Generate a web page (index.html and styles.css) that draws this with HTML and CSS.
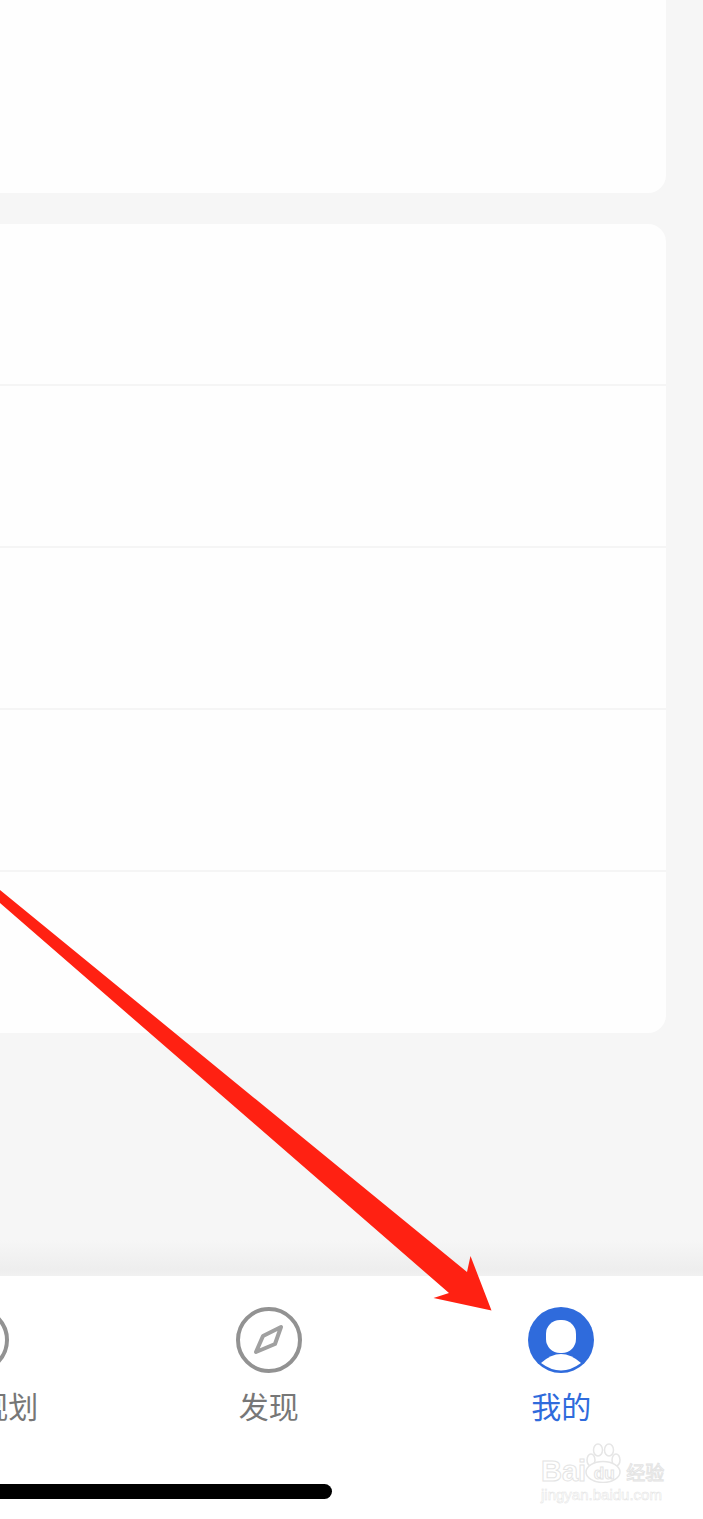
FILE: index.html
```html
<!DOCTYPE html>
<html lang="zh-CN">
<head>
    <meta charset="UTF-8">
    <meta name="viewport" content="width=device-width, initial-scale=1.0">
    <title>我的</title>
    <link rel="stylesheet" href="styles.css">
</head>
<body>
    <div class="screen">
        <div class="content">
            <div class="card card-top"></div>
            <div class="card">
                <div class="row"></div>
                <div class="row"></div>
                <div class="row"></div>
                <div class="row"></div>
                <div class="row row-last"></div>
            </div>
        </div>

        <div class="tabbar">
            <div class="tabs">
                <div class="tab">
                    <svg class="tab-icon" viewBox="0 0 66 66">
                        <circle cx="33" cy="33" r="31" fill="none" stroke="#929292" stroke-width="4"/>
                    </svg>
                    <span class="tab-label tab-label-long">行程规划</span>
                </div>
                <div class="tab">
                    <svg class="tab-icon" viewBox="0 0 66 66">
                        <circle cx="33" cy="33" r="31" fill="none" stroke="#929292" stroke-width="4"/>
                        <path d="M45 20 L39 37 L20 45 L27 29 Z" fill="none" stroke="#a0a0a0" stroke-width="4" stroke-linejoin="round"/>
                    </svg>
                    <span class="tab-label">发现</span>
                </div>
                <div class="tab tab-active">
                    <svg class="tab-icon" viewBox="0 0 66 66">
                        <circle cx="33" cy="33" r="33" fill="#2f6bdc"/>
                        <rect x="18" y="13" width="30" height="33" rx="14" fill="#fff"/>
                        <path d="M13 56 Q33 38 53 56 Q33 71 13 56 Z" fill="#fff"/>
                    </svg>
                    <span class="tab-label">我的</span>
                </div>
            </div>
            <div class="home-bar"></div>
        </div>

        <!-- red annotation arrow drawn over the screenshot -->
        <svg class="arrow" viewBox="0 0 703 1519">
            <path d="M0 890 L467 1272 L470.5 1256 L491.5 1310.5 L433.5 1298 L449 1293 L0 903 Z" fill="#ff2112"/>
        </svg>

        <div class="watermark">
            <svg class="paw" viewBox="0 0 36 40">
                <g fill="#fff" stroke="#e6e6e6" stroke-width="1.5">
                    <ellipse cx="6" cy="17" rx="4" ry="6"/>
                    <ellipse cx="13" cy="7" rx="4.5" ry="6"/>
                    <ellipse cx="24" cy="7" rx="4.5" ry="6"/>
                    <ellipse cx="31" cy="17" rx="4" ry="6"/>
                    <ellipse cx="18" cy="29" rx="17" ry="10.5"/>
                </g>
            </svg>
            <div class="wm-logo"><span>Bai</span><span class="wm-du">du</span><span class="wm-cn">经验</span></div>
            <div class="wm-url">jingyan.baidu.com</div>
        </div>
    </div>
</body>
</html>
```

FILE: styles.css
```css
* {
    margin: 0;
    padding: 0;
    box-sizing: border-box;
}

body {
    font-family: "Noto Sans CJK SC", "Liberation Sans", sans-serif;
    background: #f6f6f6;
}

.screen {
    position: relative;
    width: 703px;
    height: 1519px;
    overflow: hidden;
    display: flex;
    flex-direction: column;
}

.content {
    flex: 1;
    padding-right: 37px;
    margin-left: -24px;
    display: flex;
    flex-direction: column;
    gap: 31px;
    background: linear-gradient(to bottom, #f6f6f6 1240px, #eeeeee 1269px, #f1f1f1 1276px);
}

.card {
    background: #fefefe;
    border-radius: 18px;
}

.card-top {
    height: 193px;
    border-radius: 0 0 18px 18px;
}

.row {
    height: 162px;
    border-bottom: 2px solid #f5f5f5;
}

.row-last {
    height: 161px;
    border-bottom: none;
}

.tabbar {
    height: 243px;
    background: #fff;
    padding-top: 31px;
}

.tabs {
    display: flex;
    margin-left: -170px;
}

.tab {
    width: 292.5px;
    flex-shrink: 0;
    display: flex;
    flex-direction: column;
    align-items: center;
}

.tab-icon {
    width: 66px;
    height: 66px;
    display: block;
}

.tab-label {
    margin-top: 13px;
    font-size: 30px;
    line-height: 38px;
    color: #777;
    white-space: nowrap;
}

.tab-label-long {
    margin-left: 4px;
}

.tab-active .tab-label {
    color: #2f6bdc;
}

.home-bar {
    width: 372px;
    height: 15px;
    margin: 60px 0 0 -40px;
    background: #000;
    border-radius: 8px;
}

.arrow {
    position: absolute;
    left: 0;
    top: 0;
    width: 703px;
    height: 1519px;
}

.watermark {
    position: absolute;
    left: 541px;
    top: 1443px;
    width: 125px;
    color: #fff;
    -webkit-text-stroke: 1px #e4e4e4;
}

.paw {
    position: absolute;
    left: 44px;
    top: 0;
    width: 36px;
    height: 40px;
}

.wm-logo {
    position: relative;
    margin-top: 13px;
    display: flex;
    align-items: center;
    height: 30px;
    font-family: "Liberation Sans", sans-serif;
    font-size: 29px;
    font-weight: bold;
}

.wm-du {
    width: 36px;
    margin-top: 5px;
    font-size: 17px;
    text-align: center;
}

.wm-cn {
    font-family: "Noto Sans CJK SC", sans-serif;
    font-size: 19px;
    font-weight: normal;
    margin-left: 4px;
}

.wm-url {
    font-family: "Liberation Sans", sans-serif;
    font-size: 15px;
    line-height: 18px;
    white-space: nowrap;
    -webkit-text-stroke: 0.5px #e4e4e4;
}
```
